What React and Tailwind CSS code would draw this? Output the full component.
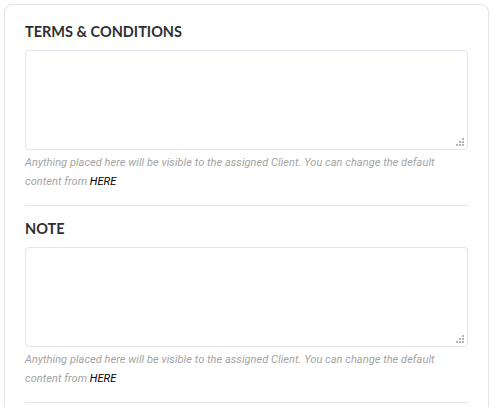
import React from "react";

function Grip() {
  return (
    <svg
      className="absolute right-[3px] bottom-[3px] pointer-events-none"
      width="9"
      height="9"
      viewBox="0 0 9 9"
    >
      <rect x="6" y="0" width="2" height="2" fill="#b5b5b5" />
      <rect x="3" y="3" width="2" height="2" fill="#b5b5b5" />
      <rect x="6" y="3" width="2" height="2" fill="#b5b5b5" />
      <rect x="0" y="6" width="2" height="2" fill="#b5b5b5" />
      <rect x="3" y="6" width="2" height="2" fill="#b5b5b5" />
      <rect x="6" y="6" width="2" height="2" fill="#b5b5b5" />
    </svg>
  );
}

function Section({ title }) {
  return (
    <div className="pb-[14px] border-b border-[#e6e6e6]">
      <h3 className="font-['Lato',sans-serif] font-bold text-[14.5px] leading-[20px] text-[#2f2f33]">
        {title}
      </h3>
      <div className="relative mt-[8px]">
        <textarea className="block w-full h-[100px] resize-none rounded-[4px] border border-[#e2e5ec] bg-white outline-none" />
        <Grip />
      </div>
      <p className="mt-[3px] font-['Roboto',sans-serif] italic text-[11px] leading-[19px] text-[#a3a3a3] tracking-[0.05px]">
        Anything placed here will be visible to the assigned Client. You can change the default content from{" "}
        <span className="text-black">HERE</span>
      </p>
    </div>
  );
}

export default function App() {
  return (
    <div className="w-[492px] h-[407px] bg-white overflow-hidden pt-[4px] pl-[4px]">
      <div className="w-[485px] h-[420px] rounded-[8px] border border-[#e3e3e3] bg-white pl-[20px] pr-[20px] pt-[17px]">
        <div className="flex flex-col gap-[13px]">
          <Section title="TERMS & CONDITIONS" />
          <Section title="NOTE" />
        </div>
      </div>
    </div>
  );
}
